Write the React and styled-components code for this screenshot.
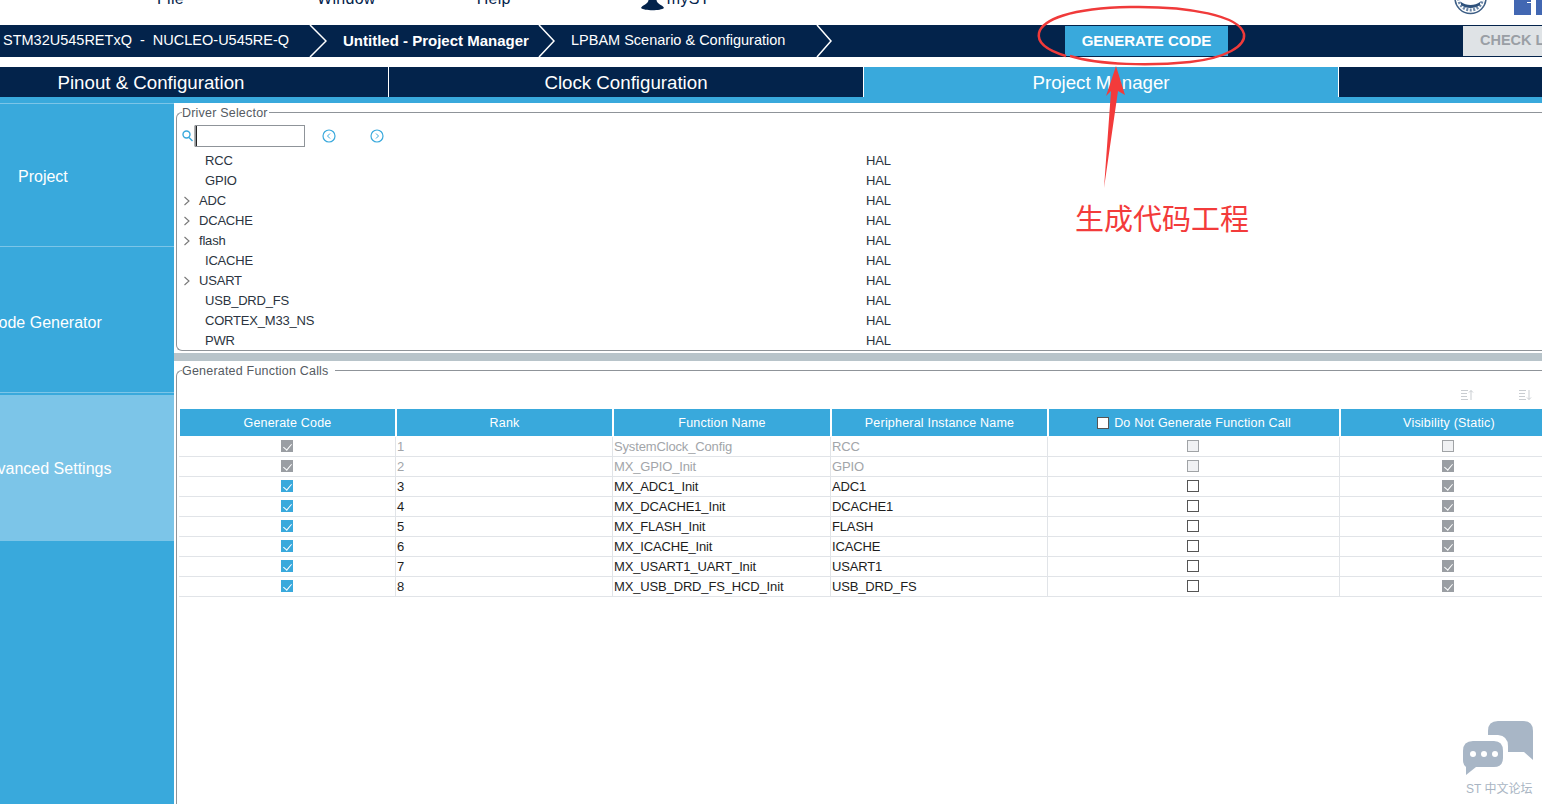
import React from 'react';
import styled, { createGlobalStyle } from 'styled-components';

const GlobalStyle = createGlobalStyle`
html,body{margin:0;padding:0;background:#fff;overflow:hidden;}
body{font-family:"Liberation Sans",Arial,sans-serif;}
*{box-sizing:border-box;}
`;

const Page = styled.div`
position:relative;
width:1542px;
height:804px;
overflow:hidden;
background:#fff;`;

const MenuBar = styled.div`
display:flex;
height:25px;
overflow:hidden;
color:#03234b;`;

const MenuItem = styled.div`
margin-left:${(props)=>props.$left}px;
margin-top:-10px;
height:18px;
line-height:18px;
font-size:16px;
letter-spacing:.3px;
white-space:nowrap;`;

const MenuIcon = styled.svg`
flex:none;
margin-left:${(props)=>props.$left}px;
display:block;`;

const Nav = styled.div`
display:flex;
align-items:center;
height:32px;
background:#03234b;
color:#fff;`;

const Crumb = styled.div`
flex:none;
width:${(props)=>props.$width}px;
padding-left:${(props)=>props.$pad}px;
padding-bottom:2px;
font-size:${(props)=>props.$bold ? 15 : 14.5}px;
font-weight:${(props)=>props.$bold ? 700 : 400};
white-space:nowrap;`;

const Chevron = styled.svg`
flex:none;
display:block;`;

const GenerateButton = styled.div`
flex:none;
margin-left:${(props)=>props.$left}px;
display:flex;
align-items:center;
justify-content:center;
width:163px;
height:30px;
padding-bottom:2px;
background:#39a9dc;
font-size:15px;
font-weight:700;`;

const CheckButton = styled.div`
flex:none;
margin-left:235px;
width:120px;
height:30px;
line-height:28px;
padding-left:17px;
background:#dfe3e6;
color:#9a9fa5;
font-size:14.5px;
font-weight:700;
white-space:nowrap;`;

const Tabs = styled.div`
display:flex;
margin-top:10px;
margin-left:-86px;
width:1700px;
height:30px;
background:#03234b;`;

const Tab = styled.div`
flex:none;
width:475px;
line-height:32px;
text-align:center;
font-size:18.7px;
color:#fff;
border-right:1px solid #fff;
background:${(props)=>props.$active ? '#39a9dc' : '#03234b'};`;

const BlueBar = styled.div`
height:6px;
background:#39a9dc;`;

const Body = styled.div`
display:flex;
height:701px;`;

const Sidebar = styled.div`
flex:none;
width:174px;
background:#39a9dc;
border-top:1px solid #7cc5e8;
overflow:hidden;`;

const SideItem = styled.div`
display:flex;
align-items:center;
height:${(props)=>props.$height}px;
margin-bottom:${(props)=>props.$gap || 0}px;
padding-left:${(props)=>props.$indent}px;
background:${(props)=>props.$active ? '#7cc5e8' : '#39a9dc'};
border-bottom:${(props)=>props.$active ? 'none' : '1px solid #7cc5e8'};
color:#fff;
font-size:16px;
white-space:nowrap;`;

const SideLabel = styled.span`
flex:none;
margin-left:${(props)=>props.$shift || 0}px;
margin-top:${(props)=>props.$drop || 0}px;`;

const Main = styled.div`
flex:1;
min-width:0;
overflow:hidden;`;

const Group = styled.fieldset`
width:1420px;
margin:0 0 0 2px;
padding:0;
height:${(props)=>props.$height}px;
border:1px solid #8f9499;
border-right:none;
border-radius:6px 0 0 6px;`;

const Legend = styled.legend`
margin-left:5px;
padding:2px ${(props)=>props.$after || 1}px 0 0;
line-height:16px;
font-size:12.5px;
letter-spacing:.2px;
color:#555b62;`;

const SearchRow = styled.div`
display:flex;
align-items:center;
height:22px;
margin-top:4px;
margin-bottom:3px;
padding-left:5px;`;

const SearchInput = styled.input`
flex:none;
width:110px;
height:22px;
margin:0 0 0 2px;
padding:0;
border:1px solid #8f9499;
outline:none;
background:#fff;
box-shadow:-1px 0 0 -0.5px #666,inset 1px 0 0 #222;`;

const RoundIcon = styled.svg`
flex:none;
display:block;
margin-left:${(props)=>props.$left}px;`;

const TreeRow = styled.div`
display:grid;
grid-template-columns:689px 100px;
height:20px;
padding-top:1px;
line-height:20px;
font-size:13px;
letter-spacing:-.2px;
color:#2b3440;`;

const TreeName = styled.div`
display:flex;
align-items:center;
height:20px;
padding-left:${(props)=>props.$branch ? 6 : 28}px;`;

const Expander = styled.svg`
flex:none;
display:block;
margin-right:8px;`;

const Splitter = styled.div`
height:8px;
margin-top:2px;
background:#b8c4ca;`;

const SortRow = styled.div`
display:flex;
align-items:center;
height:30px;
padding-top:2px;
padding-left:1283px;`;

const SortIcon = styled.svg`
flex:none;
display:block;
margin-right:44px;`;

const TableGrid = styled.div`
display:grid;
grid-template-columns:217px 217px 218px 217px 292px 218px;`;

const HeadRow = styled(TableGrid)`
margin-left:3px;
height:27px;
margin-bottom:1px;`;

const HeadCell = styled.div`
display:flex;
align-items:center;
justify-content:center;
margin-right:2px;
background:#39a9dc;
color:#fff;
font-size:12.5px;
letter-spacing:.2px;`;

const DataRow = styled(TableGrid)`
margin-left:2px;
height:20px;`;

const checkColors = {
  blue:{bg:'#39a9dc',line:'#39a9dc'},
  grey:{bg:'#9a9ea3',line:'#9a9ea3'},
  empty:{bg:'#fff',line:'#555'},
  off:{bg:'#f0f1f3',line:'#a0a3a6'},
};

const Check = styled.span`
position:relative;
flex:none;
display:block;
width:12px;
height:12px;
margin-right:${(props)=>props.$right || 0}px;
background:${(props)=>checkColors[props.$kind].bg};
border:1px solid ${(props)=>checkColors[props.$kind].line};
&::after{
  content:"";
  display:${(props)=>props.$kind === 'blue' || props.$kind === 'grey' ? 'block' : 'none'};
  position:absolute;
  left:3px;
  top:1px;
  width:4px;
  height:7px;
  border:solid #fff;
  border-width:0 1.5px 1.5px 0;
  transform:rotate(40deg);
}`;

const DataCell = styled.div`
display:flex;
align-items:center;
justify-content:${(props)=>props.$center ? 'center' : 'flex-start'};
padding-left:${(props)=>props.$center ? 0 : 1}px;
padding-bottom:1px;
border-right:1px solid #e1e4e8;
border-bottom:1px solid #e1e4e8;
font-size:13px;
letter-spacing:-.15px;
color:${(props)=>props.$muted ? '#a2a5a9' : '#1d1d1d'};`;

const Note = styled.svg`
position:absolute;
left:0;
top:0;
pointer-events:none;`;

const NoteText = styled.div`
position:absolute;
left:1075px;
top:199px;
line-height:36px;
font-family:"Noto Sans CJK SC",sans-serif;
font-size:29px;
color:#f33b3b;
white-space:nowrap;`;

const Forum = styled.div`
position:absolute;
left:1440px;
top:710px;
width:102px;
height:94px;`;

const ForumText = styled.div`
position:absolute;
left:26px;
top:71px;
line-height:16px;
font-family:"Liberation Sans","Noto Sans CJK SC",sans-serif;
font-size:12px;
color:#a9b5c3;
white-space:nowrap;`;

const drivers = [
  { name:'RCC' }, { name:'GPIO' }, { name:'ADC', branch:true }, { name:'DCACHE', branch:true },
  { name:'flash', branch:true }, { name:'ICACHE' }, { name:'USART', branch:true },
  { name:'USB_DRD_FS' }, { name:'CORTEX_M33_NS' }, { name:'PWR' },
];

const calls = [
  { fn:'SystemClock_Config', ip:'RCC', muted:true, vis:'off' },
  { fn:'MX_GPIO_Init', ip:'GPIO', muted:true, vis:'grey' },
  { fn:'MX_ADC1_Init', ip:'ADC1', vis:'grey' },
  { fn:'MX_DCACHE1_Init', ip:'DCACHE1', vis:'grey' },
  { fn:'MX_FLASH_Init', ip:'FLASH', vis:'grey' },
  { fn:'MX_ICACHE_Init', ip:'ICACHE', vis:'grey' },
  { fn:'MX_USART1_UART_Init', ip:'USART1', vis:'grey' },
  { fn:'MX_USB_DRD_FS_HCD_Init', ip:'USB_DRD_FS', vis:'grey' },
];

function NavChevron({ width }) {
  return (
    <Chevron width={width} height="32" viewBox={`0 0 ${width} 32`}>
      <polyline points={`1,0 ${width-1},16 1,32`} fill="none" stroke="#fff" strokeWidth="1.5" />
    </Chevron>
  );
}

function SortGlyph({ down }) {
  return (
    <SortIcon width="14" height="12" viewBox="0 0 14 12">
      <g stroke="#c9cdd1" strokeWidth="1" fill="none">
        <path d="M1 1.500H8M1 4.500H7M1 7.500H7M1 10.500H8" />
        {down
          ? <path d="M11 1V10.500M9 8.500L11 10.500L13 8.500" />
          : <path d="M11 11V1.500M9 3.500L11 1.500L13 3.500" />}
      </g>
    </SortIcon>
  );
}

function App() {
  return (
    <Page>
      <GlobalStyle />
      <MenuBar>
        <MenuItem $left={157}>File</MenuItem>
        <MenuItem $left={133}>Window</MenuItem>
        <MenuItem $left={101}>Help</MenuItem>
        <MenuIcon $left={130} width="23" height="11" viewBox="0 0 23 11">
          <path d="M7.500 0H15.500C15.500 4 22 5 23 8C20 11 3 11 0 8C1 5 7.500 4 7.500 0Z" fill="#03234b" />
        </MenuIcon>
        <MenuItem $left={3}>myST</MenuItem>
        <MenuIcon $left={744} width="33" height="15" viewBox="0 0 33 15">
          <circle cx="16.500" cy="-2" r="15.500" fill="#fff" stroke="#3e5f86" strokeWidth="1.500" />
          <circle cx="16.500" cy="-2" r="12" fill="none" stroke="#6d88a8" strokeWidth="3" strokeDasharray="2 1.500" />
          <path d="M7 2C12 6 21 6 26 2V5C21 9 12 9 7 5Z" fill="#2f527c" />
        </MenuIcon>
        <MenuIcon $left={27} width="30" height="15" viewBox="0 0 30 15">
          <path d="M0 0H30V15H0Z" fill="#4267b2" />
          <path d="M17 15V0H22V15ZM13 2H17V3H13Z" fill="#fff" />
        </MenuIcon>
      </MenuBar>

      <Nav>
        <Crumb $width={309} $pad={3}>STM32U545RETxQ&nbsp; -&nbsp; NUCLEO-U545RE-Q</Crumb>
        <NavChevron width={18} />
        <Crumb $width={211} $pad={16} $bold>Untitled - Project Manager</Crumb>
        <NavChevron width={17} />
        <Crumb $width={261} $pad={16}>LPBAM Scenario &amp; Configuration</Crumb>
        <NavChevron width={16} />
        <GenerateButton $left={233}>GENERATE CODE</GenerateButton>
        <CheckButton>CHECK LICENSES</CheckButton>
      </Nav>

      <Tabs>
        <Tab>Pinout &amp; Configuration</Tab>
        <Tab>Clock Configuration</Tab>
        <Tab $active>Project Manager</Tab>
      </Tabs>
      <BlueBar />

      <Body>
        <Sidebar>
          <SideItem $height={143} $indent={18}><SideLabel $drop={4}>Project</SideLabel></SideItem>
          <SideItem $height={146} $gap={2} $indent={0}><SideLabel $shift={-13} $drop={6}>Code Generator</SideLabel></SideItem>
          <SideItem $height={146} $active $indent={0}><SideLabel $shift={-22} $drop={2}>Advanced Settings</SideLabel></SideItem>
        </Sidebar>
        <Main>
          <Group $height={248}>
            <Legend>Driver Selector</Legend>
            <SearchRow>
              <svg width="11" height="12" viewBox="0 0 11 12">
                <circle cx="4.500" cy="4.500" r="3.500" fill="none" stroke="#39a9dc" strokeWidth="1.400" />
                <path d="M7 7.500L10.500 11" stroke="#39a9dc" strokeWidth="1.400" />
              </svg>
              <SearchInput aria-label="search" readOnly />
              <RoundIcon $left={17} width="14" height="14" viewBox="0 0 14 14">
                <circle cx="7" cy="7" r="6" fill="none" stroke="#39a9dc" strokeWidth="1.200" />
                <path d="M8 4.500L5.500 7L8 9.500" fill="none" stroke="#39a9dc" strokeWidth="1" />
              </RoundIcon>
              <RoundIcon $left={34} width="14" height="14" viewBox="0 0 14 14">
                <circle cx="7" cy="7" r="6" fill="none" stroke="#39a9dc" strokeWidth="1.200" />
                <path d="M6 4.500L8.500 7L6 9.500" fill="none" stroke="#39a9dc" strokeWidth="1" />
              </RoundIcon>
            </SearchRow>
            {drivers.map((item) => (
              <TreeRow key={item.name}>
                <TreeName $branch={item.branch}>
                  {item.branch && (
                    <Expander width="8" height="10" viewBox="0 0 8 10">
                      <path d="M1.500 1L6 5L1.500 9" fill="none" stroke="#777" strokeWidth="1.100" />
                    </Expander>
                  )}
                  {item.name}
                </TreeName>
                <div>HAL</div>
              </TreeRow>
            ))}
          </Group>
          <Splitter />
          <Group $height={450}>
            <Legend $after={6}>Generated Function Calls</Legend>
            <SortRow>
              <SortGlyph />
              <SortGlyph down />
            </SortRow>
            <HeadRow>
              <HeadCell>Generate Code</HeadCell>
              <HeadCell>Rank</HeadCell>
              <HeadCell>Function Name</HeadCell>
              <HeadCell>Peripheral Instance Name</HeadCell>
              <HeadCell><Check $kind="empty" $right={5} />Do Not Generate Function Call</HeadCell>
              <HeadCell>Visibility (Static)</HeadCell>
            </HeadRow>
            {calls.map((call, index) => (
              <DataRow key={call.fn}>
                <DataCell $center><Check $kind={call.muted ? 'grey' : 'blue'} /></DataCell>
                <DataCell $muted={call.muted}>{index + 1}</DataCell>
                <DataCell $muted={call.muted}>{call.fn}</DataCell>
                <DataCell $muted={call.muted}>{call.ip}</DataCell>
                <DataCell $center><Check $kind={call.muted ? 'off' : 'empty'} $right={2} /></DataCell>
                <DataCell $center><Check $kind={call.vis} $right={2} /></DataCell>
              </DataRow>
            ))}
          </Group>
        </Main>
      </Body>

      <Note width="1542" height="804" viewBox="0 0 1542 804">
        <path
          d="M1066 56C1046 50 1037 42 1039 33C1042 20 1070 8 1130 7C1190 6 1240 16 1244 34C1246 46 1226 58 1190 62C1150 66 1100 65 1070 56"
          fill="none" stroke="#f03a3a" strokeWidth="2.500"
        />
        <path d="M1116 66L1125 95L1118 91L1104 188L1111 91L1106 96Z" fill="#f33b3b" />
      </Note>
      <NoteText>生成代码工程</NoteText>

      <Forum>
        <svg width="102" height="70" viewBox="0 0 102 70">
          <path d="M48 21Q48 11 58 11H83Q93 11 93 21V50L84 42H68V36Q68 26 58 25H48Z" fill="#a8b6c6" />
          <path d="M23 41Q23 31 33 31H54Q63 31 63 41V48Q63 57 54 57H36L26 65V57Q23 55 23 50Z" fill="#a8b6c6" />
          <circle cx="33" cy="44" r="3" fill="#fff" />
          <circle cx="44" cy="44" r="3" fill="#fff" />
          <circle cx="55" cy="44" r="3" fill="#fff" />
        </svg>
        <ForumText>ST 中文论坛</ForumText>
      </Forum>
    </Page>
  );
}

export default App;
